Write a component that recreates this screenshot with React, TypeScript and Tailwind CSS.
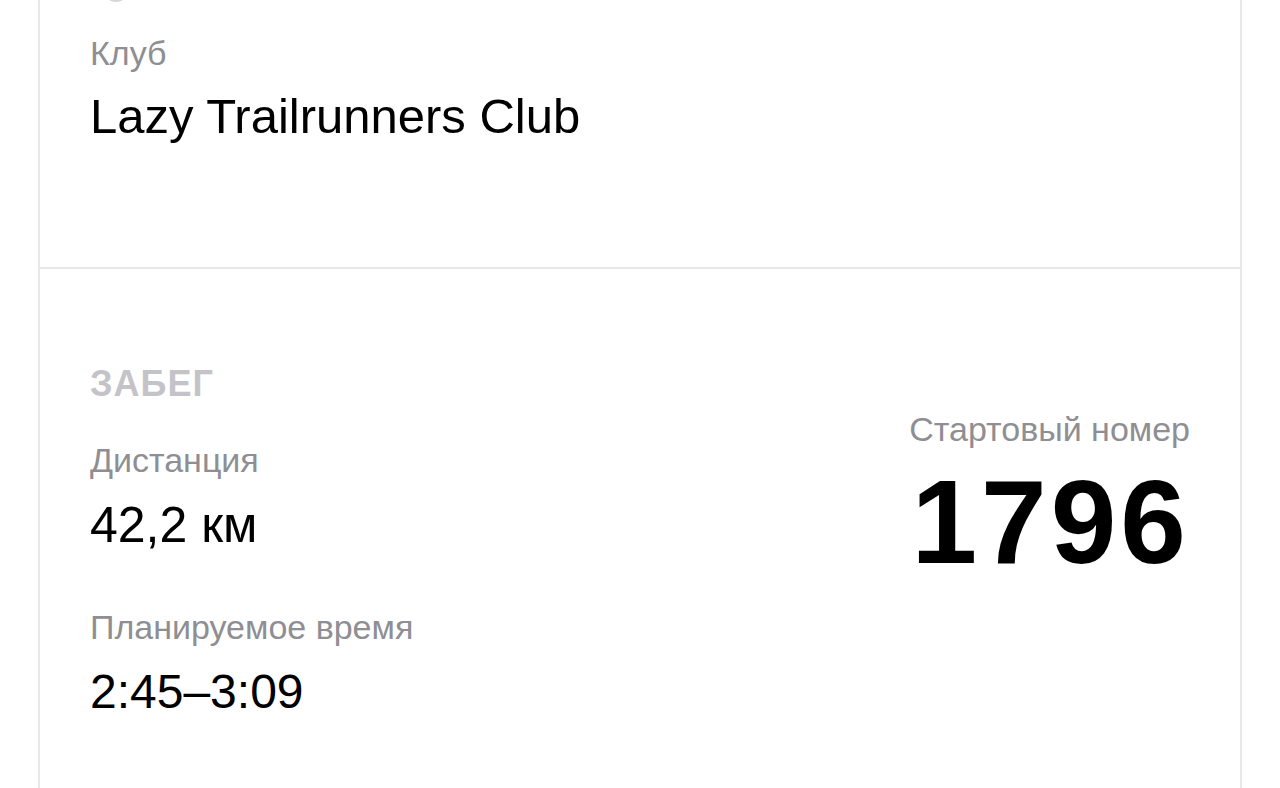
import React from 'react';

const Label: React.FC<{ children: React.ReactNode; className?: string }> = ({ children, className = '' }) => (
    <div className={`text-[34px] leading-none text-[#8e8e93] ${className}`}>{children}</div>
);

const Value: React.FC<{ children: React.ReactNode; className?: string }> = ({ children, className = '' }) => (
    <div className={`leading-none text-black ${className}`}>{children}</div>
);

export default function App() {
    return (
        <div className="min-h-screen bg-white font-['Liberation_Sans',Arial,sans-serif] overflow-hidden">
            <div className="mx-[38px] border-x-2 border-[#e8e8ea]">
                {/* club */}
                <section className="flow-root h-[269px] px-[50px] border-b-2 border-[#e8e8ea]">
                    <div className="ml-[13px] -mt-[24px] w-[26px] h-[26px] rounded-full bg-[#d6d6da]"></div>
                    <Label className="mt-[34px]">Клуб</Label>
                    <div className="mt-[22px] text-[49px] leading-none text-black">Lazy Trailrunners Club</div>
                </section>

                {/* race */}
                <section className="px-[50px] pt-[97px] pb-[100px]">
                    <h2 className="text-[36px] leading-none font-bold tracking-[1px] text-[#c4c4c8]">ЗАБЕГ</h2>
                    <div className="flex justify-between items-start">
                        <div className="mt-[41px]">
                            <Label>Дистанция</Label>
                            <Value className="mt-[23px] text-[50px]">42,2 км</Value>
                            <Label className="mt-[60px]">Планируемое время</Label>
                            <Value className="mt-[24px] text-[48px]">2:45–3:09</Value>
                        </div>
                        <div className="mt-[10px] text-right">
                            <Label>Стартовый номер</Label>
                            <div className="mt-[17px] text-[118px] leading-none font-bold tracking-[4px] text-black">1796</div>
                        </div>
                    </div>
                </section>
            </div>
        </div>
    );
}
